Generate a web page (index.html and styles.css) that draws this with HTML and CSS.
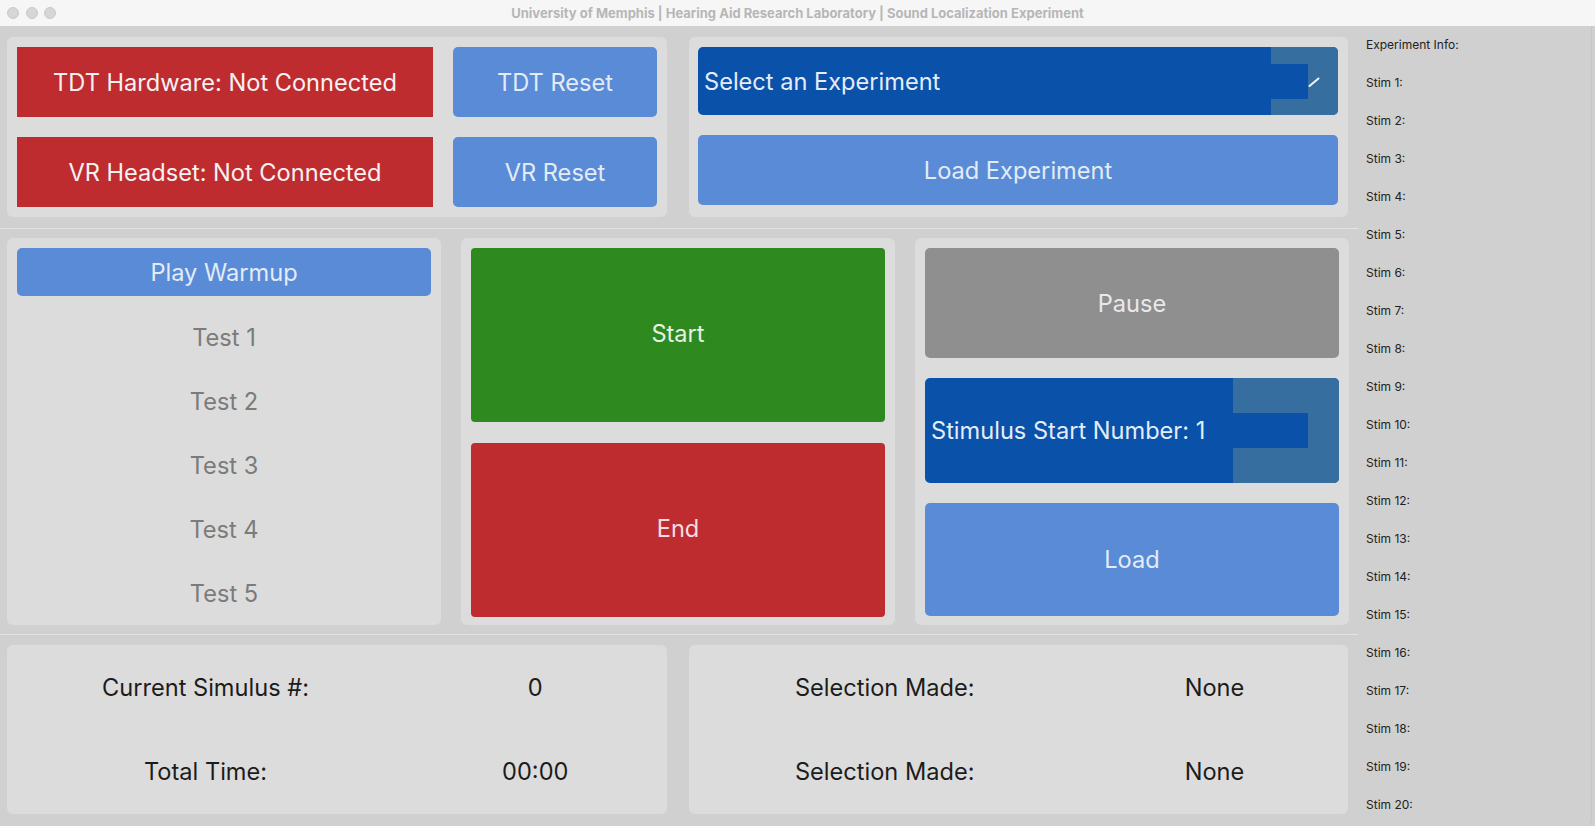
FILE: index.html
```html
<!DOCTYPE html>
<html lang="en">
<head>
<meta charset="utf-8">
<title>Sound Localization Experiment</title>
<link rel="stylesheet" href="styles.css">
</head>
<body>
<div class="titlebar">
  <div class="lights"><span class="light"></span><span class="light"></span><span class="light"></span></div>
  <div class="title">University of Memphis | Hearing Aid Research Laboratory | Sound Localization Experiment</div>
</div>
<div class="window">
  <div class="main">
    <section class="sec sec-top">
      <div class="panel conn">
        <div class="btn red">TDT Hardware: Not Connected</div>
        <div class="btn blue">TDT Reset</div>
        <div class="btn red">VR Headset: Not Connected</div>
        <div class="btn blue">VR Reset</div>
      </div>
      <div class="panel exp">
        <div class="combo">
          <div class="combo-text">Select an Experiment</div>
          <div class="combo-arrow">
            <span class="inner"></span>
            <svg class="slash" width="12" height="12" viewBox="0 0 12 12"><line x1="1.5" y1="10" x2="10.5" y2="2.5" stroke="#f2f5fa" stroke-width="2" stroke-linecap="round"/></svg>
          </div>
        </div>
        <div class="btn blue load-exp">Load Experiment</div>
      </div>
    </section>
    <div class="splitter"></div>
    <section class="sec sec-mid">
      <div class="panel tests">
        <div class="btn blue warmup">Play Warmup</div>
        <div class="test-list">
          <div class="test">Test 1</div>
          <div class="test">Test 2</div>
          <div class="test">Test 3</div>
          <div class="test">Test 4</div>
          <div class="test">Test 5</div>
        </div>
      </div>
      <div class="panel control">
        <div class="btn green big">Start</div>
        <div class="btn red rounded big">End</div>
      </div>
      <div class="panel stim">
        <div class="btn gray pause">Pause</div>
        <div class="spin">
          <div class="spin-text">Stimulus Start Number: 1</div>
          <div class="spin-arrow"><span class="inner"></span></div>
        </div>
        <div class="btn blue load">Load</div>
      </div>
    </section>
    <div class="splitter"></div>
    <section class="sec sec-bot">
      <div class="panel stats stats-left">
        <div class="cell">Current Simulus #:</div>
        <div class="cell">0</div>
        <div class="cell">Total Time:</div>
        <div class="cell">00:00</div>
      </div>
      <div class="panel stats">
        <div class="cell">Selection Made:</div>
        <div class="cell">None</div>
        <div class="cell">Selection Made:</div>
        <div class="cell">None</div>
      </div>
    </section>
  </div>
  <aside class="info">
    <div class="row">Experiment Info:</div>
    <div class="row">Stim 1:</div>
    <div class="row">Stim 2:</div>
    <div class="row">Stim 3:</div>
    <div class="row">Stim 4:</div>
    <div class="row">Stim 5:</div>
    <div class="row">Stim 6:</div>
    <div class="row">Stim 7:</div>
    <div class="row">Stim 8:</div>
    <div class="row">Stim 9:</div>
    <div class="row">Stim 10:</div>
    <div class="row">Stim 11:</div>
    <div class="row">Stim 12:</div>
    <div class="row">Stim 13:</div>
    <div class="row">Stim 14:</div>
    <div class="row">Stim 15:</div>
    <div class="row">Stim 16:</div>
    <div class="row">Stim 17:</div>
    <div class="row">Stim 18:</div>
    <div class="row">Stim 19:</div>
    <div class="row">Stim 20:</div>
  </aside>
</div>
</body>
</html>
```
FILE: styles.css
```css
* { box-sizing: border-box; }
html, body { margin: 0; padding: 0; }
body {
  width: 1595px;
  height: 826px;
  overflow: hidden;
  background: #d0d0d0;
  font-family: Inter, "Liberation Sans", sans-serif;
  color: #1c1c1c;
}
.titlebar {
  height: 26px;
  background: #f6f6f6;
  display: flex;
  align-items: center;
  justify-content: center;
  position: relative;
}
.lights {
  position: absolute;
  left: 7px;
  top: 7px;
  display: flex;
  gap: 6.5px;
}
.light {
  width: 12px;
  height: 12px;
  border-radius: 50%;
  background: #d6d6d6;
  border: 1px solid #cacaca;
}
.title {
  font-size: 13px;
  font-weight: 700;
  color: #b6b6b6;
}
.window {
  display: flex;
  height: 800px;
}
.main {
  width: 1358px;
  display: flex;
  flex-direction: column;
}
.sec { display: flex; }
.sec-top { height: 202px; padding: 11px 10px 11px 7px; gap: 22px; }
.sec-mid { height: 406px; padding: 9px 9px 9px 7px; gap: 20px; }
.sec-bot { height: 191px; padding: 10px 10px 12px 7px; gap: 22px; }
.splitter {
  height: 1px;
  background: #e2e2e2;
}
.panel {
  flex: 1;
  background: #dcdcdc;
  border-radius: 6px;
}
.btn {
  display: flex;
  align-items: center;
  justify-content: center;
  font-size: 23.6px;
  color: #e9eff9;
  border-radius: 5px;
}
.red { background: #be2c2f; color: #f7f1f1; border-radius: 0; }
.red.rounded { border-radius: 4px; color: #f6dde1; }
.blue { background: #5a8bd6; color: #e3ebf7; }
.green { background: #2e891f; color: #e6f2e3; border-radius: 4px; }
.gray { background: #8f8f8f; color: #e8e8ee; }

.conn {
  display: grid;
  grid-template-columns: 416px 1fr;
  grid-template-rows: 70px 70px;
  gap: 20px;
  padding: 10px;
}
.exp {
  display: flex;
  flex-direction: column;
  gap: 20px;
  padding: 10px 10px 10px 9px;
}
.combo {
  height: 68px;
  display: flex;
  background: #0a51a9;
  border-radius: 5px;
  overflow: hidden;
}
.combo-text {
  flex: 1;
  display: flex;
  align-items: center;
  padding-left: 6px;
  font-size: 23.6px;
  color: #e4ecf8;
}
.combo-arrow {
  width: 67px;
  background: #376ea0;
  display: flex;
  align-items: center;
}
.combo-arrow .inner {
  width: 37px;
  height: 35px;
  background: #0a51a9;
}
.slash { margin-top: 2px; }
.load-exp { height: 70px; }

.tests {
  display: flex;
  flex-direction: column;
  padding: 10px 10px 0 10px;
}
.warmup { height: 48px; flex: none; }
.test-list {
  flex: 1;
  display: flex;
  flex-direction: column;
  margin-top: 10px;
}
.test {
  flex: 1;
  display: flex;
  align-items: center;
  justify-content: center;
  font-size: 23.6px;
  color: #7b7b7b;
}
.control {
  display: flex;
  flex-direction: column;
  gap: 21px;
  padding: 10px 10px 8px;
}
.big { flex: 1; padding-bottom: 4px; }
.stim {
  display: flex;
  flex-direction: column;
  gap: 20px;
  padding: 10px 10px 9px;
}
.pause { height: 110px; }
.load { flex: 1; }
.spin {
  height: 105px;
  display: flex;
  background: #0a51a9;
  border-radius: 5px;
  overflow: hidden;
}
.spin-text {
  flex: 1;
  display: flex;
  align-items: center;
  padding-left: 6px;
  font-size: 23.6px;
  color: #e4ecf8;
}
.spin-arrow {
  width: 106px;
  background: #376ea0;
  display: flex;
  align-items: center;
}
.spin-arrow .inner {
  width: 75px;
  height: 35px;
  background: #0a51a9;
}
.stats {
  display: grid;
  grid-template-columns: 59.5% 40.5%;
  grid-template-rows: 1fr 1fr;
}
.stats-left { grid-template-columns: 60.2% 39.8%; }
.cell {
  display: flex;
  align-items: center;
  justify-content: center;
  font-size: 23.6px;
  color: #1c1c1c;
}
.info {
  flex: 1;
  background: #d0d0d0;
  border-right: 1px solid #c6c6c6;
  border-bottom-right-radius: 6px;
  padding-left: 8px;
  padding-top: 0;
  margin-right: 3px;
  margin-top: -1px;
}
.row {
  height: 38px;
  display: flex;
  align-items: center;
  font-size: 12px;
  color: #222;
}
```
